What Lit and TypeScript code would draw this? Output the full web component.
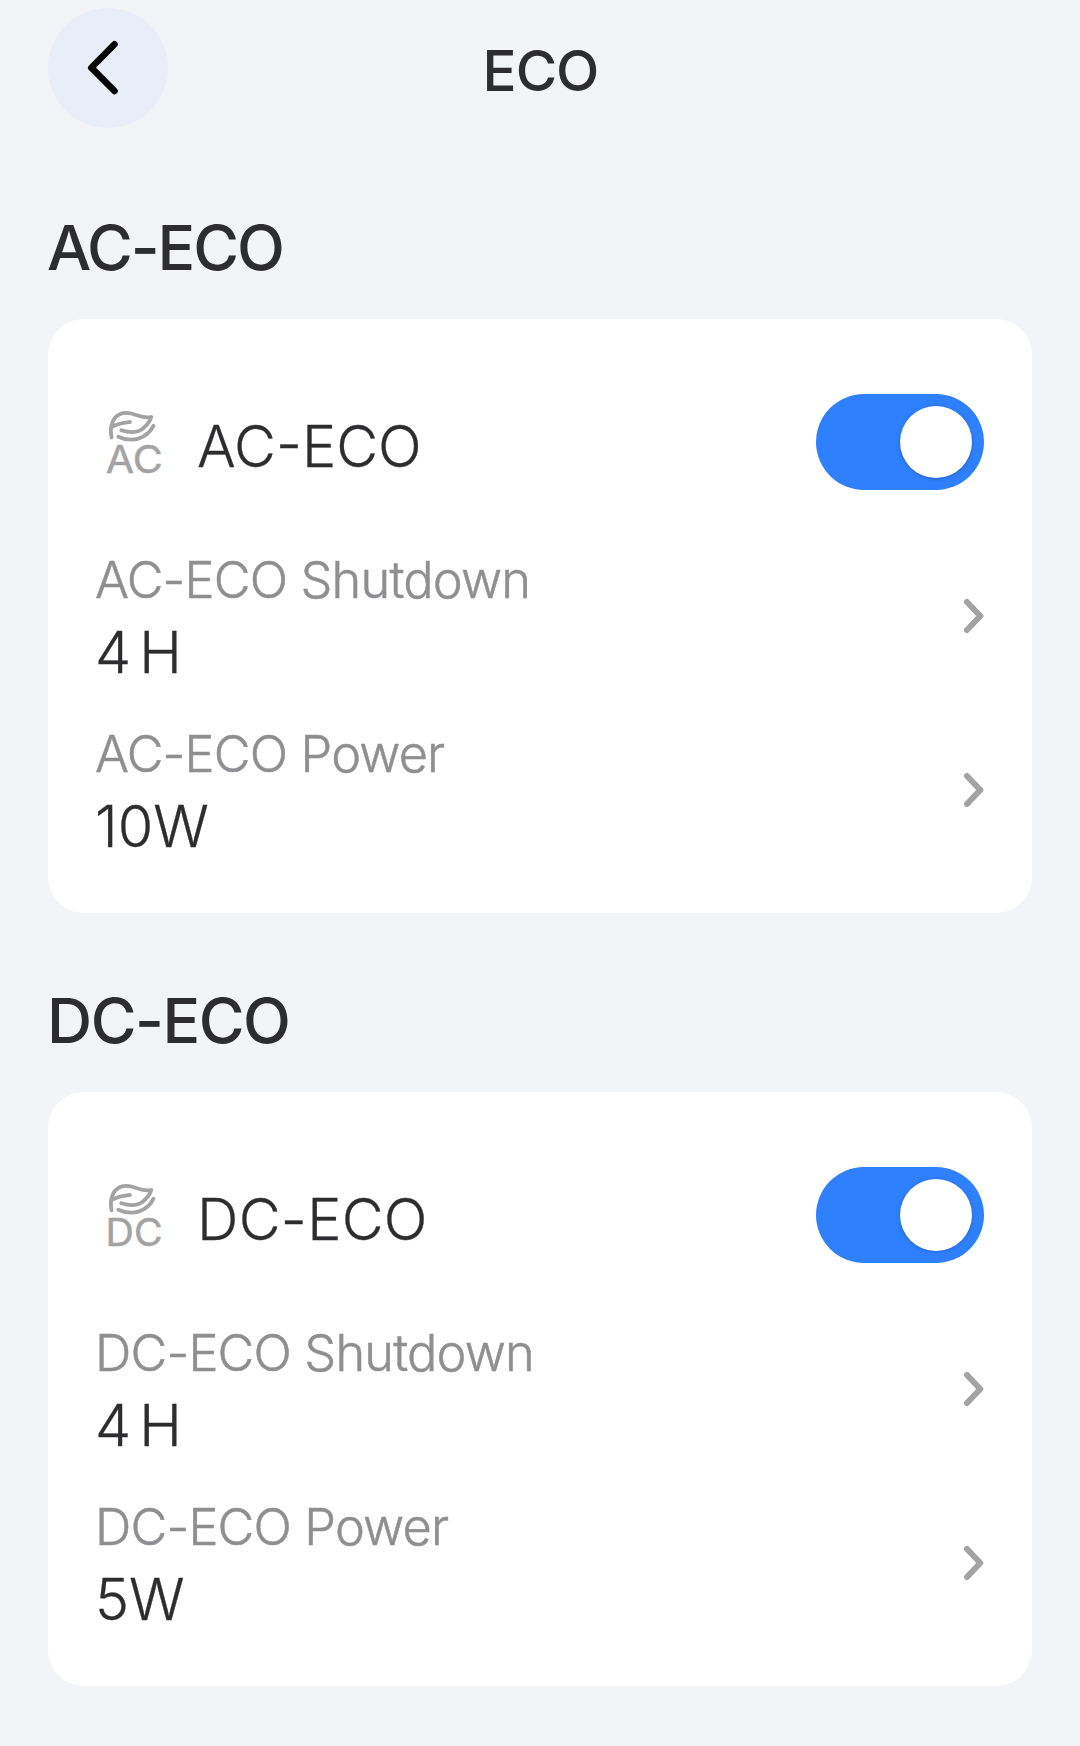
import { LitElement, html, css } from "lit";
import { classMap } from "lit/directives/class-map.js";

interface Setting {
  label: string;
  value: string;
}
interface Group {
  kind: "AC" | "DC";
  settings: Setting[];
}

const GROUPS: Group[] = [
  { kind: "AC", settings: [{ label: "AC-ECO Shutdown", value: "4 H" }, { label: "AC-ECO Power", value: "10W" }] },
  { kind: "DC", settings: [{ label: "DC-ECO Shutdown", value: "4 H" }, { label: "DC-ECO Power", value: "5W" }] },
];

class AppRoot extends LitElement {
  static properties = { enabled: { state: true } };
  declare enabled: Record<string, boolean>;

  static styles = css`
    :host {
      display: block;
      box-sizing: border-box;
      min-height: 1746px;
      padding: 8px 48px 60px;
      background: #f3f4f8;
      color: #2d2d2f;
      font-family: Inter, "Liberation Sans", sans-serif;
    }
    * { box-sizing: border-box; }
    button { border: 0; padding: 0; font: inherit; color: inherit; cursor: pointer; }
    svg { display: block; }
    .header { display: grid; grid-template-columns: 120px 1fr 120px; align-items: center; height: 120px; }
    .back { width: 120px; height: 120px; border-radius: 50%; background: #e9edf7; }
    .title { margin: 0; padding-top: 6px; text-align: center; font-size: 56.5px; font-weight: 500; line-height: 68px; letter-spacing: -1px; text-indent: 1px; }
    .heading { margin: 0 0 0 -1px; padding: 82px 0 35px; font-size: 62.5px; font-weight: 500; line-height: 74px; letter-spacing: -2.05px; }
    .heading.dc { padding-top: 70px; letter-spacing: -1.45px; }
    .card { height: 594px; padding: 75px 48px 36px; border-radius: 36px; background: #fff; }
    .head { display: flex; align-items: center; height: 96px; margin-bottom: 39px; }
    .mode { width: 72px; height: 80px; margin: 8px 29px 0 0; overflow: visible; }
    .mode text { font-family: Inter, "Liberation Sans", sans-serif; }
    .name { flex: 1; padding-top: 8px; font-size: 57.5px; font-weight: 300; line-height: 68px; letter-spacing: 0; -webkit-text-stroke: 0.3px currentColor; }
    .name.dc { letter-spacing: 0.3px; }
    .switch { display: flex; justify-content: flex-start; width: 168px; height: 96px; padding: 12px; border-radius: 48px; background: #d5d7dd; }
    .switch.on { justify-content: flex-end; background: #2f80ff; }
    .thumb { width: 72px; height: 72px; border-radius: 50%; background: #fff; box-shadow: 0 1px 4px rgba(0, 0, 0, 0.22); }
    .row { display: flex; align-items: center; justify-content: space-between; height: 174px; }
    .label { margin-left: -1px; color: #8f8f92; font-size: 50.5px; font-weight: 300; line-height: 72px; letter-spacing: -0.85px; -webkit-text-stroke: 0.5px currentColor; }
    .value { margin-left: -1px; font-size: 57.5px; font-weight: 300; line-height: 72px; word-spacing: -8px; -webkit-text-stroke: 0.3px currentColor; }
  `;

  constructor() {
    super();
    this.enabled = { AC: true, DC: true };
  }

  private toggle(kind: string) {
    this.enabled = { ...this.enabled, [kind]: !this.enabled[kind] };
  }

  private modeIcon(kind: "AC" | "DC") {
    return html`<svg class="mode" viewBox="0 0 72 80" aria-hidden="true">
      <g fill="none" stroke="#a3a3a3" stroke-width="3.8" stroke-linecap="round" stroke-linejoin="round">
        <path d="M15.600 31.300C12.800 18 18.500 7 29.700 6.800C40 6.800 44.500 13 55.300 11C54.500 14 51 19 47 22.500C42 26.500 34 27 25.300 24.300" />
        <path d="M15.500 21.200C21.500 17.300 27 16.800 34 16" />
        <path d="M22.300 30.700C37 37.500 51.500 32 57.500 19.700" />
      </g>
      <text x=${kind === "AC" ? 9.8 : 9.6} y="67" font-size="37.5" font-weight="400" textLength="57"
        lengthAdjust="spacingAndGlyphs" fill="#a3a3a3" stroke="#a3a3a3" stroke-width="0.5" stroke-linejoin="round">${kind}</text>
    </svg>`;
  }

  private group(g: Group) {
    const on = this.enabled[g.kind];
    const dc = g.kind === "DC";
    return html`<section>
      <h2 class=${classMap({ heading: true, dc })}>${g.kind}-ECO</h2>
      <div class="card">
        <div class="head">
          ${this.modeIcon(g.kind)}
          <div class=${classMap({ name: true, dc })}>${g.kind}-ECO</div>
          <button class=${classMap({ switch: true, on })} role="switch" aria-checked=${on} @click=${() => this.toggle(g.kind)}>
            <span class="thumb"></span>
          </button>
        </div>
        ${g.settings.map((s) => html`<div class="row">
          <div>
            <div class="label">${s.label}</div>
            <div class="value">${s.value}</div>
          </div>
          <svg width="24" height="40" viewBox="0 0 24 40" fill="none" stroke="#a3a3a3" stroke-width="6" stroke-linecap="round" stroke-linejoin="round">
            <path d="M7 6L20.300 20L7 34" />
          </svg>
        </div>`)}
      </div>
    </section>`;
  }

  render() {
    return html`<header class="header">
        <button class="back">
          <svg width="120" height="120" viewBox="0 0 120 120" fill="none" stroke="#000" stroke-width="6.6" stroke-linecap="round" stroke-linejoin="round">
            <path d="M66.500 36.300L43.300 59.700L66.500 83" />
          </svg>
        </button>
        <h1 class="title">ECO</h1>
      </header>
      ${GROUPS.map((g) => this.group(g))}`;
  }
}
customElements.define("app-root", AppRoot);
